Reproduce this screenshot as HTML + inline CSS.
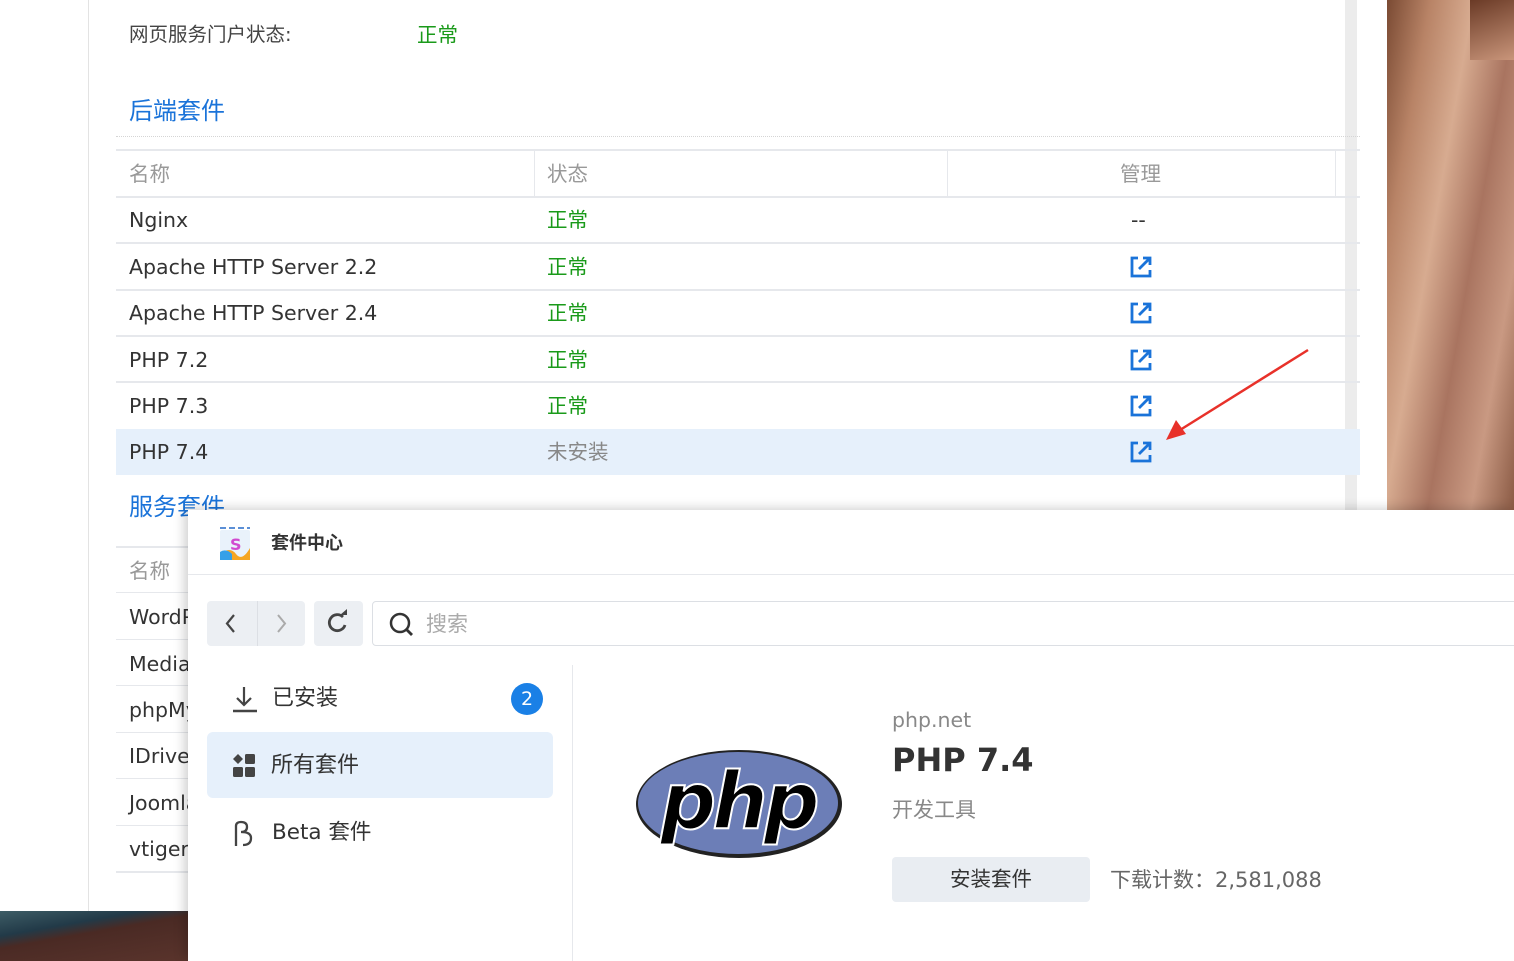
<!DOCTYPE html>
<html><head><meta charset="utf-8"><style>
*{margin:0;padding:0;box-sizing:border-box}
body{width:1514px;height:961px;overflow:hidden;position:relative;background:#fff;font-family:"DejaVu Sans","Noto Sans CJK SC",sans-serif;color:#333}
.a{position:absolute}
.photo{left:1387px;top:0;width:127px;height:511px;background:linear-gradient(100deg,#7a4a33 0%,#b88366 20%,#d7ab90 40%,#a97460 60%,#c99982 80%,#8a5a44 100%)}
.bot{left:0;top:911px;width:190px;height:50px;background:linear-gradient(170deg,#3e5d66 0%,#223a48 30%,#4a2a24 45%,#5a342c 100%)}
.t{font-size:20.5px;white-space:nowrap;line-height:26px}
.row{left:116px;width:1244px;height:1px;background:#e6e8ec}
.g{color:#1a9a1a}
</style></head><body>
<div class="a photo"></div>
<div class="a" style="left:1470px;top:0;width:44px;height:60px;background:linear-gradient(160deg,#6a3a26,#c9957a)"></div>
<div class="a bot"></div>
<div class="a" style="left:88px;top:0;width:1px;height:911px;background:#e3e3e3"></div>
<div class="a" style="left:1345px;top:0;width:12px;height:511px;background:#ececec"></div>

<div class="a t" style="left:129px;top:22px;font-size:19.5px;color:#444">网页服务门户状态:</div>
<div class="a t g" style="left:417px;top:22px">正常</div>
<div class="a t" style="left:129px;top:98px;font-size:24px;color:#1a73d9">后端套件</div>
<div class="a" style="left:116px;top:136px;width:1244px;border-top:1px dotted #d5d5d5"></div>
<div class="a row" style="top:149px;height:2px"></div>
<div class="a" style="left:534px;top:151px;width:1px;height:45px;background:#e6e8ec"></div>
<div class="a" style="left:947px;top:151px;width:1px;height:45px;background:#e6e8ec"></div>
<div class="a" style="left:1335px;top:151px;width:1px;height:45px;background:#e6e8ec"></div>
<div class="a t" style="left:129px;top:161px;color:#999">名称</div>
<div class="a t" style="left:547px;top:161px;color:#999">状态</div>
<div class="a t" style="left:1120px;top:161px;color:#999">管理</div>
<div class="a" style="left:116px;top:429px;width:1244px;height:46px;background:#e6f0fb"></div>
<div class="a row" style="top:196px;height:2px"></div>
<div class="a row" style="top:242px;height:2px"></div>
<div class="a row" style="top:289px;height:2px"></div>
<div class="a row" style="top:335px;height:2px"></div>
<div class="a row" style="top:381px;height:2px"></div>

<div class="a t" style="left:129px;top:207px">Nginx</div>
<div class="a t g" style="left:547px;top:207px">正常</div>
<div class="a t" style="left:1131px;top:207px">--</div>
<div class="a t" style="left:129px;top:254px">Apache HTTP Server 2.2</div>
<div class="a t g" style="left:547px;top:254px">正常</div>
<div class="a t" style="left:129px;top:300px">Apache HTTP Server 2.4</div>
<div class="a t g" style="left:547px;top:300px">正常</div>
<div class="a t" style="left:129px;top:347px">PHP 7.2</div>
<div class="a t g" style="left:547px;top:347px">正常</div>
<div class="a t" style="left:129px;top:393px">PHP 7.3</div>
<div class="a t g" style="left:547px;top:393px">正常</div>
<div class="a t" style="left:129px;top:439px">PHP 7.4</div>
<div class="a t" style="left:547px;top:439px;color:#888">未安装</div>

<svg class="a" style="left:0;top:0" width="1514" height="511">
<defs><g id="ln"><path d="M9 3H3v18h18v-6" fill="none" stroke="#1a73d9" stroke-width="2.8"/><path d="M10 14L20 4M14 3h7v7" fill="none" stroke="#1a73d9" stroke-width="2.8"/></g></defs>
<use href="#ln" x="1129" y="255"/><use href="#ln" x="1129" y="301"/><use href="#ln" x="1129" y="348"/><use href="#ln" x="1129" y="394"/><use href="#ln" x="1129" y="440"/>
<path d="M1308 350L1180 430" stroke="#e8312a" stroke-width="2.5"/>
<path d="M1166 440L1176 420L1186 434Z" fill="#e8312a"/>
</svg>

<div class="a t" style="left:129px;top:494px;font-size:24px;color:#1a73d9">服务套件</div>
<div class="a row" style="top:546px;height:2px"></div>
<div class="a t" style="left:129px;top:558px;color:#999">名称</div>
<div class="a row" style="top:592px"></div>
<div class="a t" style="left:129px;top:604px">WordPress</div>
<div class="a row" style="top:639px"></div>
<div class="a t" style="left:129px;top:651px">Media</div>
<div class="a row" style="top:685px"></div>
<div class="a t" style="left:129px;top:697px">phpMy</div>
<div class="a row" style="top:732px"></div>
<div class="a t" style="left:129px;top:743px">IDrive</div>
<div class="a row" style="top:778px"></div>
<div class="a t" style="left:129px;top:790px">Joomla</div>
<div class="a row" style="top:825px"></div>
<div class="a t" style="left:129px;top:836px">vtiger</div>
<div class="a row" style="top:871px;height:2px"></div>

<div class="a" style="left:188px;top:510px;width:1326px;height:451px;background:#fff;box-shadow:-4px -2px 10px rgba(0,0,0,.18)">
 <div class="a" style="left:0;top:64px;width:1326px;height:1px;background:#e6e8ec"></div>
 <svg class="a" style="left:30px;top:16px" width="36" height="36" viewBox="0 0 36 36">
  <rect x="2" y="4" width="30" height="30" rx="2" fill="#e9f2fb"/>
  <path d="M2 2h6M11 2h6M20 2h6M29 2h3" stroke="#5b8fd6" stroke-width="2"/>
  <path d="M2 28q10-8 16 0t14-6v12H2z" fill="#f5a623"/>
  <path d="M2 26q6-4 12 2v6H2z" fill="#35a0e8"/>
  <text x="12" y="24" font-size="16" font-weight="bold" fill="#d14ad0" font-family="DejaVu Sans">S</text>
 </svg>
 <div class="a t" style="left:83px;top:21px;font-size:18px;font-weight:bold;color:#333">套件中心</div>
 <div class="a" style="left:19px;top:91px;width:50px;height:45px;background:#eceff3;border-radius:4px 0 0 4px"></div>
 <div class="a" style="left:69px;top:91px;width:1px;height:45px;background:#dcdfe4"></div>
 <div class="a" style="left:70px;top:91px;width:47px;height:45px;background:#eceff3;border-radius:0 4px 4px 0"></div>
 <div class="a" style="left:126px;top:91px;width:49px;height:45px;background:#eceff3;border-radius:4px"></div>
 <svg class="a" style="left:19px;top:91px" width="160" height="45">
  <path d="M27 14l-7 8.5 7 8.5" fill="none" stroke="#444" stroke-width="2.2"/>
  <path d="M71 14l7 8.5-7 8.5" fill="none" stroke="#aaa" stroke-width="2"/>
  <path d="M134 16a8 8 0 1 0 2 8" fill="none" stroke="#444" stroke-width="2.8" transform="translate(2,0)"/>
  <path d="M131 14h7v-6z" fill="#444" transform="translate(2,0)"/>
 </svg>
 <div class="a" style="left:184px;top:91px;width:1150px;height:45px;border:1px solid #dcdfe4;border-radius:4px"></div>
 <svg class="a" style="left:200px;top:101px" width="28" height="28"><circle cx="12" cy="12" r="9" fill="none" stroke="#333" stroke-width="2.5"/><path d="M18 18l6 6" stroke="#333" stroke-width="2.8"/></svg>
 <div class="a t" style="left:238px;top:101px;color:#aaa;font-size:21px">搜索</div>
 <div class="a" style="left:384px;top:155px;width:1px;height:296px;background:#e6e8ec"></div>
 <svg class="a" style="left:44px;top:175px" width="26" height="28"><path d="M12 2v18M5 13l7 7 7-7" fill="none" stroke="#444" stroke-width="2.2"/><path d="M1 26h24" stroke="#444" stroke-width="2.5"/></svg>
 <div class="a t" style="left:84px;top:176px;font-size:22px">已安装</div>
 <div class="a" style="left:323px;top:173px;width:32px;height:32px;border-radius:16px;background:#1a80e6;color:#fff;font-size:19px;text-align:center;line-height:32px">2</div>
 <div class="a" style="left:19px;top:222px;width:346px;height:66px;background:#e6f0fb;border-radius:6px"></div>
 <svg class="a" style="left:44px;top:244px" width="24" height="24"><path d="M6 0l5 5-5 5-5-5z" fill="#444"/><rect x="13" y="0" width="10" height="10" rx="1.5" fill="#444"/><rect x="1" y="13" width="10" height="10" rx="1.5" fill="#444"/><rect x="13" y="13" width="10" height="10" rx="1.5" fill="#444"/></svg>
 <div class="a t" style="left:83px;top:243px;font-size:22px">所有套件</div>
 <svg class="a" style="left:44px;top:310px" width="24" height="28"><path d="M4 26V6q0-4 5-4q6 0 6 5q0 5-6 5q10 0 10 6q0 7-8 7" fill="none" stroke="#444" stroke-width="2.3"/></svg>
 <div class="a t" style="left:84px;top:310px;font-size:21.5px">Beta 套件</div>
 <svg class="a" style="left:446px;top:238px" width="210" height="112" viewBox="0 0 210 112">
  <ellipse cx="105" cy="56" rx="103" ry="54" fill="#222"/>
  <ellipse cx="104" cy="55" rx="100" ry="51" fill="#6c7eb7"/>
  <text x="104" y="80" text-anchor="middle" font-size="78" font-weight="bold" font-style="italic" fill="#000" stroke="#fff" stroke-width="2" font-family="DejaVu Sans" letter-spacing="-4">php</text>
 </svg>
 <div class="a t" style="left:704px;top:197px;color:#888">php.net</div>
 <div class="a t" style="left:704px;top:230px;font-size:32px;line-height:40px;font-weight:bold;color:#333">PHP 7.4</div>
 <div class="a t" style="left:704px;top:287px;color:#888;font-size:21px">开发工具</div>
 <div class="a" style="left:704px;top:347px;width:198px;height:45px;background:#e9edf2;border-radius:4px;text-align:center;line-height:45px;font-size:20.5px">安装套件</div>
 <div class="a t" style="left:922px;top:357px;color:#666;font-size:21px">下载计数：2,581,088</div>
</div>
</body></html>
